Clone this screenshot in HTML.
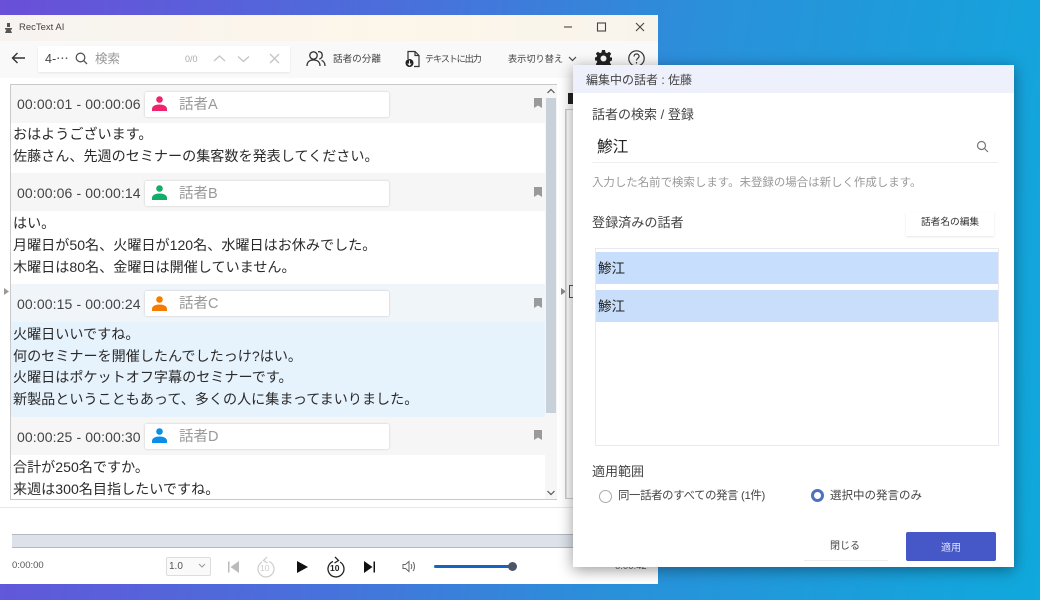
<!DOCTYPE html>
<html lang="ja"><head><meta charset="utf-8">
<style>
*{box-sizing:border-box;margin:0;padding:0}
html,body{width:1040px;height:600px;overflow:hidden}
body{position:relative;background:linear-gradient(100deg,#6a4fd8 0%,#4a6fdb 35%,#2a90da 62%,#0fa9dc 100%);font-family:"Liberation Sans","Noto Sans CJK JP",sans-serif;color:#333}
div,svg,span.a{position:absolute}
.t{white-space:nowrap;line-height:1}
.win{left:0;top:15px;width:658px;height:569px;background:#fff}
.hdr{left:11px;width:536px;height:38px;background:#f6f6f6}
.time{left:17px;font-size:14px;letter-spacing:.12px;color:#444}
.spk{left:145px;width:244px;height:25px;background:#fff;border-radius:2px;box-shadow:0 0 2px rgba(0,0,0,.2)}
.spkn{left:179px;font-size:14.5px;color:#999}
.line{left:13px;font-size:14.1px;color:#2b2b2b;line-height:1}
.mark{left:534px;width:8px;height:10px}
</style></head><body>
<div class="win"></div>
<div style="left:0;top:15px;width:658px;height:26px;background:linear-gradient(90deg,#f7f3f0,#fdf6ea 60%,#f8f4ec)"></div>
<div style="left:0;top:41px;width:658px;height:37px;background:#f9f9f9"></div>

<!-- title -->
<svg style="left:4px;top:23px" width="10" height="10" viewBox="0 0 10 10"><path d="M3 0h3v4H3zM1 5h7v1.500H6.500L8 10H1l1.500-3.500H1z" fill="#555"/></svg>
<div class="t" style="left:19px;top:23px;font-size:9.500px;color:#444">RecText AI</div>
<svg style="left:560px;top:20px" width="90" height="14" viewBox="0 0 90 14" fill="none" stroke="#444" stroke-width="1.100"><path d="M4 7h8"/><rect x="37.500" y="3" width="8" height="8"/><path d="M76 3l8 8M84 3l-8 8"/></svg>

<!-- toolbar -->
<svg style="left:11px;top:51px" width="15" height="14" viewBox="0 0 15 14" fill="none" stroke="#333" stroke-width="1.400"><path d="M14 7H1.500M6.500 2L1.500 7l5 5"/></svg>
<div style="left:38px;top:46px;width:252px;height:26px;background:#fff;border-radius:2px;box-shadow:0 1px 2px rgba(0,0,0,.08)"></div>
<div class="t" style="left:45px;top:53px;font-size:12.500px;color:#444">4-⋯</div>
<svg style="left:75px;top:52px" width="13" height="13" viewBox="0 0 13 13" fill="none" stroke="#555" stroke-width="1.300"><circle cx="5.500" cy="5.500" r="4.300"/><path d="M8.700 8.700L12 12"/></svg>
<div class="t" style="left:95px;top:53px;font-size:12.500px;color:#999">検索</div>
<div class="t" style="left:185px;top:55px;font-size:9px;color:#aaa">0/0</div>
<svg style="left:212px;top:52px" width="70" height="13" viewBox="0 0 70 13" fill="none" stroke="#c4c4c4" stroke-width="1.300"><path d="M2 9l5.500-5L13 9M26 4.500l5.500 5L37 4.500M58 2l9 9M67 2l-9 9"/></svg>

<svg style="left:306px;top:50px" width="20" height="17" viewBox="0 0 20 17" fill="none" stroke="#333" stroke-width="1.300"><circle cx="7.500" cy="5.500" r="3.700"/><path d="M1 16c0-4 2.500-6 6.500-6s6.500 2 6.500 6M12 1.800c2.500-.5 4.200 1 4.200 3.400s-1.500 3.500-3 3.800M15.500 10.300c2 .8 3.500 2.500 3.500 5.700"/></svg>
<div class="t" style="left:333px;top:55px;font-size:9.600px;color:#444">話者の分離</div>
<svg style="left:405px;top:50px" width="16" height="18" viewBox="0 0 16 18" fill="none" stroke="#333" stroke-width="1.200"><path d="M3 9V1.500h7l4 4V16.500H9M10 1.500v4h4"/><circle cx="4.500" cy="13" r="4" fill="#222" stroke="none"/><path d="M4.500 10.500V15M2.800 13.500l1.700 1.700 1.700-1.700" stroke="#fff" stroke-width=".9"/></svg>
<div class="t" style="left:425px;top:55px;font-size:9.200px;letter-spacing:-1.200px;color:#444">テキストに出力</div>
<div class="t" style="left:508px;top:55px;font-size:9.200px;color:#444">表示切り替え</div>
<svg style="left:568px;top:56px" width="9" height="6" viewBox="0 0 9 6" fill="none" stroke="#444" stroke-width="1.200"><path d="M1 1l3.500 3.500L8 1"/></svg>
<svg style="left:595px;top:50px" width="17" height="17" viewBox="0 0 17 17"><path d="M7 0h3l.5 2.500 1.500.6L14.200 1.700l2 2.100-1.400 2.200.6 1.500L17 7.500v3l-1.600.5-.6 1.500 1.400 2.200-2 2-2.200-1.400-1.500.6L10 17H7l-.5-1.600-1.500-.6-2.200 1.400-2-2 1.400-2.200-.6-1.500L0 10.500v-3l1.600-.5.6-1.500L.8 3.800l2-2.100L5 3.100l1.500-.6z" fill="#222"/><circle cx="8.500" cy="8.500" r="3" fill="#f9f9f9"/></svg>
<svg style="left:628px;top:50px" width="17" height="17" viewBox="0 0 17 17" fill="none" stroke="#333" stroke-width="1.200"><circle cx="8.500" cy="8.500" r="7.700"/><path d="M6 6.500c0-1.700 1.200-2.500 2.500-2.500s2.600.8 2.600 2.300c0 2-2.600 2-2.600 4.200M8.500 12v1.500"/></svg>

<!-- list -->
<div style="left:10px;top:84px;width:547px;height:416px;background:#fff;border:1px solid #c9c9c9;overflow:hidden"></div>
<div style="left:11px;top:322px;width:534px;height:95px;background:#e6f2fc"></div>

<div class="hdr" style="top:85px"></div>
<div class="hdr" style="top:173px"></div>
<div class="hdr" style="top:284px;background:#f0f5fa"></div>
<div class="hdr" style="top:417px;height:38px"></div>

<div class="t time" style="top:97px">00:00:01 - 00:00:06</div>
<div class="spk" style="top:92px"></div>
<svg style="left:152px;top:96px" width="15" height="15" viewBox="0 0 15 15" fill="#f0246e"><circle cx="7.500" cy="3.500" r="3.300"/><path d="M0 15v-2C0 10 3.500 8.500 7.500 8.500S15 10 15 13v2z"/></svg>
<div class="t spkn" style="top:98px">話者A</div>
<div class="t line" style="top:127px">おはようございます。</div>
<div class="t line" style="top:149px">佐藤さん、先週のセミナーの集客数を発表してください。</div>

<div class="t time" style="top:186px">00:00:06 - 00:00:14</div>
<div class="spk" style="top:181px"></div>
<svg style="left:152px;top:185px" width="15" height="15" viewBox="0 0 15 15" fill="#12ad6b"><circle cx="7.500" cy="3.500" r="3.300"/><path d="M0 15v-2C0 10 3.500 8.500 7.500 8.500S15 10 15 13v2z"/></svg>
<div class="t spkn" style="top:187px">話者B</div>
<div class="t line" style="top:216px">はい。</div>
<div class="t line" style="top:238px">月曜日が50名、火曜日が120名、水曜日はお休みでした。</div>
<div class="t line" style="top:260px">木曜日は80名、金曜日は開催していません。</div>

<div class="t time" style="top:297px">00:00:15 - 00:00:24</div>
<div class="spk" style="top:291px"></div>
<svg style="left:152px;top:296px" width="15" height="15" viewBox="0 0 15 15" fill="#f57c00"><circle cx="7.500" cy="3.500" r="3.300"/><path d="M0 15v-2C0 10 3.500 8.500 7.500 8.500S15 10 15 13v2z"/></svg>
<div class="t spkn" style="top:297px">話者C</div>
<div class="t line" style="top:327px">火曜日いいですね。</div>
<div class="t line" style="top:349px">何のセミナーを開催したんでしたっけ?はい。</div>
<div class="t line" style="top:370px">火曜日はポケットオフ字幕のセミナーです。</div>
<div class="t line" style="top:392px">新製品ということもあって、多くの人に集まってまいりました。</div>

<div class="t time" style="top:430px">00:00:25 - 00:00:30</div>
<div class="spk" style="top:424px"></div>
<svg style="left:152px;top:428px" width="15" height="15" viewBox="0 0 15 15" fill="#0b8ee6"><circle cx="7.500" cy="3.500" r="3.300"/><path d="M0 15v-2C0 10 3.500 8.500 7.500 8.500S15 10 15 13v2z"/></svg>
<div class="t spkn" style="top:430px">話者D</div>
<div class="t line" style="top:460px">合計が250名ですか。</div>
<div class="t line" style="top:482px">来週は300名目指したいですね。</div>

<svg class="mark" style="top:98px" viewBox="0 0 8 10"><path d="M0 0h8v10L4 7.500 0 10z" fill="#9a9a9a"/></svg>
<svg class="mark" style="top:187px" viewBox="0 0 8 10"><path d="M0 0h8v10L4 7.500 0 10z" fill="#9a9a9a"/></svg>
<svg class="mark" style="top:298px" viewBox="0 0 8 10"><path d="M0 0h8v10L4 7.500 0 10z" fill="#9a9a9a"/></svg>
<svg class="mark" style="top:430px" viewBox="0 0 8 10"><path d="M0 0h8v10L4 7.500 0 10z" fill="#9a9a9a"/></svg>

<!-- scrollbar -->
<div style="left:545px;top:85px;width:12px;height:414px;background:#f6f6f6"></div>
<div style="left:546px;top:98px;width:10px;height:315px;background:#c8d0da"></div>
<svg style="left:546px;top:88px" width="10" height="6" viewBox="0 0 10 6" fill="none" stroke="#555" stroke-width="1.200"><path d="M1.500 5L5 1.500 8.500 5"/></svg>
<svg style="left:546px;top:490px" width="10" height="6" viewBox="0 0 10 6" fill="none" stroke="#555" stroke-width="1.200"><path d="M1.500 1L5 4.500 8.500 1"/></svg>

<!-- side splitters -->
<svg style="left:4px;top:288px" width="5" height="7" viewBox="0 0 5 7"><path d="M0 0l5 3.500L0 7z" fill="#999"/></svg>
<svg style="left:561px;top:288px" width="5" height="7" viewBox="0 0 5 7"><path d="M0 0l5 3.500L0 7z" fill="#888"/></svg>
<div style="left:565px;top:109px;width:8px;height:390px;background:#fff;border:1px solid #ccc;border-right:0;box-shadow:inset 1px 0 0 #e0e0e0"></div>
<div style="left:569px;top:285px;width:4px;height:13px;background:#fff;border:1px solid #555;border-right:0"></div>
<div style="left:568px;top:93px;width:5px;height:11px;background:#222"></div>

<!-- bottom player -->
<div style="left:0;top:507px;width:658px;height:1px;background:#e8e8e8"></div>
<div style="left:12px;top:534px;width:580px;height:14px;background:#dde1ea;border-top:1px solid #b4b8c0;border-bottom:1px solid #b4b8c0"></div>
<div class="t" style="left:12px;top:561px;font-size:9.500px;color:#555">0:00:00</div>
<div style="left:166px;top:557px;width:45px;height:19px;background:#fafafa;border:1px solid #ddd;border-radius:2px"></div>
<div class="t" style="left:169px;top:562px;font-size:10px;color:#555">1.0</div>
<svg style="left:198px;top:563px" width="8" height="6" viewBox="0 0 8 6" fill="none" stroke="#999"><path d="M1 1l3 3 3-3"/></svg>
<svg style="left:227px;top:560px" width="13" height="14" viewBox="0 0 13 14"><path d="M1 1.500h1.500v11H1z" fill="#bbb"/><path d="M12 1v12L3.500 7z" fill="#bbb"/></svg>
<svg style="left:256px;top:556px" width="20" height="22" viewBox="0 0 20 22" fill="none" stroke="#ccc" stroke-width="1.200"><path d="M6 6a8 8 0 1 0 7-.5M11 1L7.500 4.500l4 2.500"/></svg>
<div class="t" style="left:260px;top:564px;font-size:8.500px;color:#ccc">10</div>
<svg style="left:296px;top:560px" width="13" height="14" viewBox="0 0 13 14"><path d="M1 1l11 6-11 6z" fill="#111"/></svg>
<svg style="left:326px;top:556px" width="20" height="22" viewBox="0 0 20 22" fill="none" stroke="#222" stroke-width="1.300"><path d="M14 6a8 8 0 1 1-7-.5M9 1l3.500 3.500-4 2.500"/></svg>
<div class="t" style="left:330px;top:564px;font-size:8.500px;color:#222;font-weight:bold">10</div>
<svg style="left:363px;top:560px" width="13" height="14" viewBox="0 0 13 14"><path d="M1 1v12l8.500-6z" fill="#111"/><path d="M10.500 1.500H12v11h-1.500z" fill="#111"/></svg>
<svg style="left:402px;top:559px" width="15" height="15" viewBox="0 0 15 15" fill="none" stroke="#666" stroke-width="1"><path d="M1 5.500h2.500L7 2.500v10L3.500 9.500H1zM9 5c1 1.500 1 3.500 0 5M11 3c2 2.500 2 6.500 0 9"/></svg>
<div style="left:434px;top:565px;width:76px;height:3px;background:#1565c0;border-radius:2px"></div>
<div style="left:508px;top:562px;width:9px;height:9px;background:#4a5568;border-radius:50%"></div>
<div class="t" style="left:615px;top:562px;font-size:9.500px;color:#555">0:00:42</div>

<!-- dialog -->
<div style="left:573px;top:65px;width:441px;height:502px;background:#fff;box-shadow:0 3px 14px rgba(0,0,0,.4)"></div>
<div style="left:573px;top:65px;width:441px;height:28px;background:#eef0fb"></div>
<div class="t" style="left:586px;top:74px;font-size:12px;color:#444">編集中の話者 : 佐藤</div>
<div class="t" style="left:592px;top:108px;font-size:13px;color:#444">話者の検索 / 登録</div>
<div class="t" style="left:597px;top:140px;font-size:15.700px;color:#222">鯵江</div>
<svg style="left:976px;top:140px" width="13" height="13" viewBox="0 0 13 13" fill="none" stroke="#777" stroke-width="1.200"><circle cx="5.500" cy="5.500" r="4"/><path d="M8.500 8.500L12 12"/></svg>
<div style="left:592px;top:162px;width:406px;height:1px;background:#eee"></div>
<div class="t" style="left:592px;top:178px;font-size:11.450px;color:#999">入力した名前で検索します。未登録の場合は新しく作成します。</div>
<div class="t" style="left:592px;top:216px;font-size:13.100px;color:#444">登録済みの話者</div>
<div style="left:906px;top:212px;width:88px;height:24px;background:#fff;box-shadow:0 1px 2px rgba(0,0,0,.1)"></div>
<div class="t" style="left:921px;top:218px;font-size:9.700px;color:#333">話者名の編集</div>
<div style="left:595px;top:248px;width:404px;height:198px;background:#fff;border:1px solid #e8e8ee"></div>
<div style="left:596px;top:252px;width:402px;height:32px;background:#c7dffc"></div>
<div style="left:596px;top:290px;width:402px;height:32px;background:#c9defb"></div>
<div class="t" style="left:598px;top:262px;font-size:13.500px;color:#222">鯵江</div>
<div class="t" style="left:598px;top:300px;font-size:13.500px;color:#222">鯵江</div>
<div class="t" style="left:592px;top:465px;font-size:13px;color:#444">適用範囲</div>
<div style="left:599px;top:490px;width:13px;height:13px;border:1px solid #aaa;border-radius:50%;background:#fff"></div>
<div class="t" style="left:618px;top:491px;font-size:11.400px;letter-spacing:-.35px;color:#444">同一話者のすべての発言 (1件)</div>
<div style="left:811px;top:489px;width:13px;height:13px;border:3.500px solid #4f6fc4;border-radius:50%;background:#fff"></div>
<div class="t" style="left:830px;top:491px;font-size:11.500px;color:#444">選択中の発言のみ</div>
<div style="left:804px;top:560px;width:84px;height:1px;background:#eee"></div>
<div class="t" style="left:830px;top:542px;font-size:10px;color:#444">閉じる</div>
<div style="left:906px;top:532px;width:90px;height:29px;background:#4657c8;border-radius:2px"></div>
<div class="t" style="left:941px;top:544px;font-size:10px;color:#dfe3fa">適用</div>
</body></html>
